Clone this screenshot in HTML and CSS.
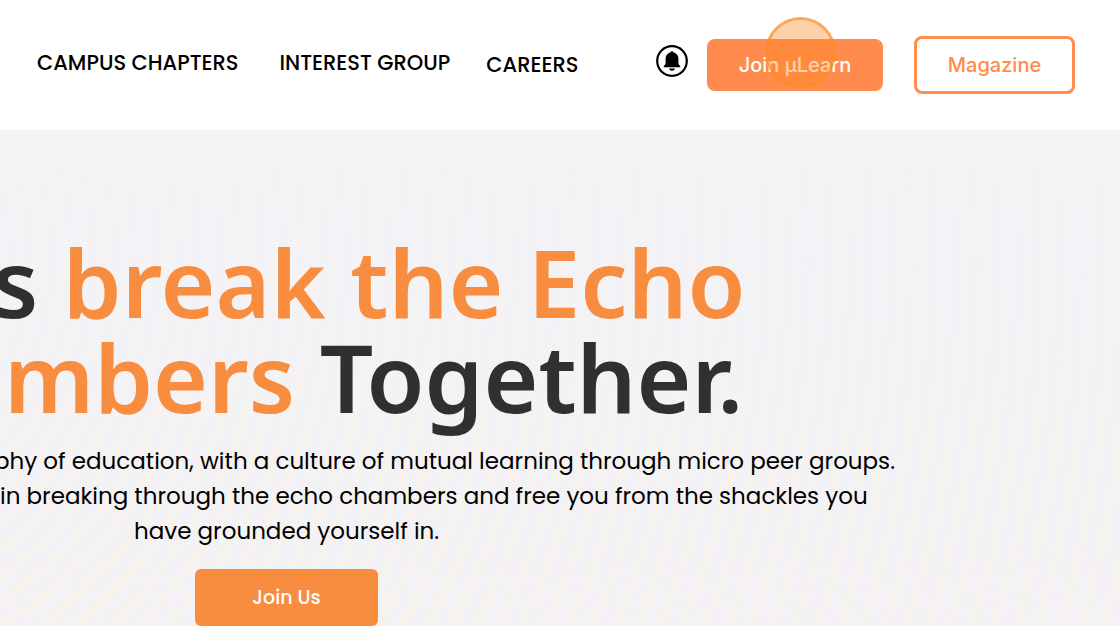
FILE: index.html
```
<!DOCTYPE html>
<html lang="en">
<head>
<meta charset="utf-8">
<meta name="viewport" content="width=device-width, initial-scale=1">
<title>µLearn</title>
<link rel="stylesheet" href="styles.css">
</head>
<body>
<header class="topbar">
  <nav class="nav">
    <a class="nav-link" href="#chapters">CAMPUS CHAPTERS</a>
    <a class="nav-link" href="#groups">INTEREST GROUP</a>
    <a class="nav-link nav-link-plain" href="#careers">CAREERS</a>
  </nav>
  <div class="actions">
    <button class="bell" type="button" aria-label="Notifications">
      <svg viewBox="0 0 32 32" width="32" height="32" aria-hidden="true">
        <circle cx="16" cy="16" r="14.8" fill="none" stroke="#000" stroke-width="2.2"/>
        <path d="M16 6.200c1 0 1.500.6 1.700 1.300 3 .8 4.700 3.100 4.700 6v4.300c0 1.500.6 2.300 1.800 3.200v1.300H7.800V21c1.200-.9 1.800-1.700 1.800-3.200v-4.300c0-2.900 1.700-5.200 4.700-6 .2-.7.7-1.300 1.700-1.300z"/>
        <path d="M13 23.600h6c-.3 1.300-1.500 2.100-3 2.100s-2.700-.8-3-2.100z"/>
      </svg>
    </button>
    <button class="btn btn-join" type="button">Join µLearn<span class="pointer"></span></button>
    <button class="btn btn-outline" type="button">Magazine</button>
  </div>
</header>
<main class="hero">
  <h1 class="title">
    <span class="line line-first">s <span class="accent">break the Echo</span></span>
    <span class="line line-second"><span class="accent">mbers</span> Together.</span>
  </h1>
  <p class="lead">
    <span class="line lead-first">phy of education, with a culture of mutual learning through micro peer groups.</span>
    <span class="line">in breaking through the echo chambers and free you from the shackles you</span>
    <span class="line lead-last">have grounded yourself in.</span>
  </p>
  <button class="btn-cta" type="button">Join Us</button>
</main>
</body>
</html>
```
FILE: styles.css
```
* { box-sizing: border-box; }
body {
  margin: 0;
  min-height: 100vh;
  display: flex;
  flex-direction: column;
  overflow: hidden;
  background: #fff;
  color: #000;
  font-family: Poppins, Inter, "Noto Sans", sans-serif;
}
button { font-family: inherit; cursor: pointer; border: 0; margin: 0; }
.topbar {
  display: flex;
  align-items: center;
  justify-content: space-between;
  height: 130px;
  padding: 0 45px 0 37px;
}
.nav { display: flex; align-items: center; }
.nav-link {
  color: #000;
  text-decoration: none;
  font-size: 21px;
  font-weight: 500;
  line-height: 28px;
  white-space: nowrap;
  padding-bottom: 4px;
  margin-right: 41px;
}
.nav-link:nth-child(2) { margin-right: 36px; }
.nav-link-plain { padding-bottom: 0; margin-right: 0; }
.actions { display: flex; align-items: center; }
.bell { display: flex; padding: 0; background: none; margin: 0 19px 8px 0; }
.btn {
  position: relative;
  border-radius: 8px;
  font-family: Inter, sans-serif;
  font-size: 20px;
  font-weight: 500;
  white-space: nowrap;
}
.btn-join { width: 176px; height: 52px; background: #ff8b4d; color: #fff; margin-right: 31px; }
.btn-outline { width: 161px; height: 58px; background: #fff; color: #ff8b4d; border: 3px solid #ff8b4d; }
.pointer {
  position: absolute;
  top: -22px;
  left: 58px;
  width: 71px;
  height: 71px;
  border: 3px solid rgba(255, 140, 30, .6);
  border-radius: 50%;
  background: rgba(255, 138, 36, .38);
}
.hero {
  flex: 1;
  padding-top: 105px;
  background:
    linear-gradient(#f3f3f6 5%, rgba(243, 243, 246, 0) 90%),
    repeating-radial-gradient(circle at -225px 125px, #f2f2f7 0 7px, #f7f2ee 11px 17px, #f2f2f7 21px);
}
.line { display: block; white-space: nowrap; }
.title {
  margin: 0;
  color: #303030;
  font-family: "Noto Sans", sans-serif;
  font-size: 94px;
  font-weight: 600;
  line-height: 95px;
}
.line-first { margin-left: -8px; }
.line-second { margin-left: 4px; }
.accent { color: #f88d40; }
.lead { margin: 19px 0 20px; font-size: 23px; line-height: 35px; }
.lead-first { margin-left: -6px; }
.lead-last { margin-left: 134px; }
.btn-cta {
  display: block;
  width: 183px;
  height: 57px;
  margin-left: 195px;
  border-radius: 6px;
  background: #f88d40;
  color: #fff;
  font-size: 19px;
  font-weight: 500;
}
```
